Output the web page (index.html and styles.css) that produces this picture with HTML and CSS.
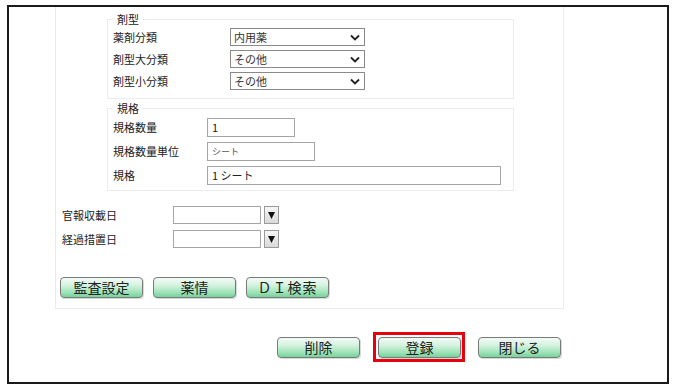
FILE: index.html
```html
<!DOCTYPE html>
<html lang="ja">
<head>
  <meta charset="UTF-8" />
  <meta name="viewport" content="width=device-width, initial-scale=1.0"/>
  <title>薬品登録</title>
  <link rel="stylesheet" href="styles.css">
</head>
<body>
  <div class="frame">
    <div class="panel">
      <fieldset class="group">
        <legend>剤型</legend>
        <div class="row row-sel">
          <span class="label">薬剤分類</span>
          <div class="select"><span>内用薬</span><svg width="10" height="7" viewBox="0 0 10 7"><path d="M1 1.5 L5 5.5 L9 1.5" fill="none" stroke="#222" stroke-width="1.8"/></svg></div>
        </div>
        <div class="row row-sel">
          <span class="label">剤型大分類</span>
          <div class="select"><span>その他</span><svg width="10" height="7" viewBox="0 0 10 7"><path d="M1 1.5 L5 5.5 L9 1.5" fill="none" stroke="#222" stroke-width="1.8"/></svg></div>
        </div>
        <div class="row row-sel">
          <span class="label">剤型小分類</span>
          <div class="select"><span>その他</span><svg width="10" height="7" viewBox="0 0 10 7"><path d="M1 1.5 L5 5.5 L9 1.5" fill="none" stroke="#222" stroke-width="1.8"/></svg></div>
        </div>
      </fieldset>

      <fieldset class="group spec">
        <legend>規格</legend>
        <div class="row row-spec">
          <span class="label">規格数量</span>
          <div class="field w-qty">1</div>
        </div>
        <div class="row row-spec">
          <span class="label">規格数量単位</span>
          <div class="field w-unit small">シート</div>
        </div>
        <div class="row row-spec">
          <span class="label">規格</span>
          <div class="field w-spec">1 シート</div>
        </div>
      </fieldset>

      <div class="dates">
        <div class="row row-date">
          <span class="label">官報収載日</span>
          <div class="field w-date"></div>
          <div class="drop"><svg width="7" height="7" viewBox="0 0 7 7"><polygon points="0,0 7,0 3.5,7" fill="#111"/></svg></div>
        </div>
        <div class="row row-date">
          <span class="label">経過措置日</span>
          <div class="field w-date"></div>
          <div class="drop"><svg width="7" height="7" viewBox="0 0 7 7"><polygon points="0,0 7,0 3.5,7" fill="#111"/></svg></div>
        </div>
      </div>

      <div class="tools">
        <button class="btn">監査設定</button>
        <button class="btn">薬情</button>
        <button class="btn wide">ＤＩ検索</button>
      </div>
    </div>

    <div class="actions">
      <button class="btn">削除</button>
      <span class="focus"><button class="btn">登録</button></span>
      <button class="btn">閉じる</button>
    </div>
  </div>
</body>
</html>
```

FILE: styles.css
```css
body {
  margin: 0;
  background: #fff;
  font-family: "Noto Sans CJK JP", "Noto Sans", sans-serif;
  font-size: 11px;
  color: #222;
}

.frame {
  box-sizing: border-box;
  width: 662px;
  height: 379px;
  margin: 5px 0 0 7px;
  border: 2px solid #1a1a1a;
}

.panel {
  box-sizing: border-box;
  width: 509px;
  margin-left: 46px;
  padding: 5px 4px 10px 4px;
  border: 1px solid #ebebeb;
  border-top: none;
}

.group {
  width: 407px;
  box-sizing: border-box;
  margin: 0 0 2px 47px;
  padding: 0 5px 6px 5px;
  border: 1px solid #ececec;
}

.group legend {
  padding: 0 4px;
  line-height: 14px;
  font-size: 11px;
}

.group.spec {
  padding-bottom: 3px;
}

.row {
  display: flex;
  align-items: center;
}

.row-sel {
  height: 22px;
}

.row-sel .label {
  width: 117px;
}

.row-spec {
  height: 24px;
}

.row-spec .label {
  width: 94px;
}

.label {
  flex: none;
  white-space: nowrap;
}

.select {
  box-sizing: border-box;
  width: 135px;
  height: 18px;
  padding: 0 4px 0 3px;
  border: 1px solid #8a8a8a;
  background: #fff;
  display: flex;
  align-items: center;
  justify-content: space-between;
  color: #333;
}

.field {
  box-sizing: border-box;
  height: 19px;
  padding: 0 4px;
  border: 1px solid #a5a5a5;
  background: #fff;
  line-height: 17px;
  color: #222;
}

.field.small {
  font-size: 9px;
  color: #555;
}

.w-qty { width: 88px; }
.w-unit { width: 108px; }
.w-spec { width: 294px; }
.w-date { width: 88px; height: 18px; }

.dates {
  margin-top: 12px;
  padding-left: 2px;
}

.row-date {
  height: 24px;
}

.row-date .label {
  width: 111px;
}

.drop {
  box-sizing: border-box;
  width: 15px;
  height: 18px;
  margin-left: 3px;
  border: 1px solid #9a9a9a;
  background: linear-gradient(#f6f6f6, #d9d9d9);
  display: flex;
  align-items: center;
  justify-content: center;
}

.tools {
  display: flex;
  gap: 10px;
  margin-top: 26px;
}

.btn {
  box-sizing: border-box;
  width: 83px;
  height: 21px;
  padding: 0;
  border: 1px solid #7a7a7a;
  border-radius: 4px;
  background: linear-gradient(#f3fbf6 0%, #d3f2de 40%, #9fe3b9 75%, #74d49a 100%);
  box-shadow: 1px 1px 0 rgba(0,0,0,0.15);
  font-family: "Noto Sans CJK JP", sans-serif;
  font-size: 14px;
  line-height: 19px;
  color: #222;
}

.btn.wide {
  letter-spacing: 1px;
}

.actions {
  width: 506px;
  margin-left: 46px;
  margin-top: 23px;
  display: flex;
  align-items: center;
  justify-content: flex-end;
  gap: 13px;
}

.focus {
  display: block;
  padding: 2px 1px 1px 2px;
  border: 3px solid #e8000b;
  line-height: 0;
}
```
